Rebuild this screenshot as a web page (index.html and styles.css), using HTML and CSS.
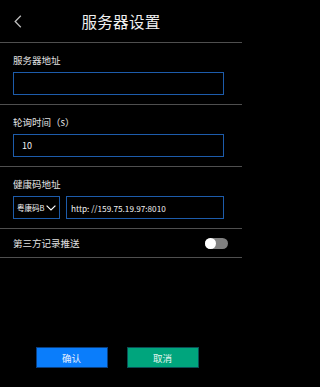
FILE: index.html
```html
<!DOCTYPE html>
<html lang="zh-CN">
<head>
<meta charset="utf-8">
<link rel="stylesheet" href="styles.css">
</head>
<body>
<div class="page">
  <header class="topbar">
    <div class="back">
      <svg width="8" height="13" viewBox="0 0 8 13"><path d="M6.8 0.8 L1.2 6.5 L6.8 12.2" fill="none" stroke="#bdbdbd" stroke-width="1.3"/></svg>
    </div>
    <h1 class="title">服务器设置</h1>
    <div></div>
  </header>

  <section class="field">
    <div class="label">服务器地址</div>
    <div class="input"></div>
  </section>

  <section class="field">
    <div class="label">轮询时间（s）</div>
    <div class="input"><span class="value">10</span></div>
  </section>

  <section class="field">
    <div class="label">健康码地址</div>
    <div class="combo">
      <div class="select">
        <span class="sel-text">粤康码B</span>
        <svg width="10" height="6" viewBox="0 0 10 6"><path d="M0.6 0.6 L5 5 L9.4 0.6" fill="none" stroke="#fff" stroke-width="1.2"/></svg>
      </div>
      <div class="input grow"><span class="value url">http: //159.75.19.97:8010</span></div>
    </div>
  </section>

  <section class="row">
    <span class="label">第三方记录推送</span>
    <div class="toggle"><span class="knob"></span></div>
  </section>

  <footer class="actions">
    <button class="btn confirm">确认</button>
    <button class="btn cancel">取消</button>
  </footer>
</div>
</body>
</html>
```

FILE: styles.css
```css
html, body {
  margin: 0;
  padding: 0;
  background: #000;
}
body {
  font-family: "Noto Sans CJK SC", "Noto Sans", sans-serif;
  color: #e6e6e6;
}
.page {
  width: 242px;
  height: 387px;
  display: flex;
  flex-direction: column;
  box-sizing: border-box;
}
.topbar {
  height: 42px;
  display: grid;
  grid-template-columns: 1fr auto 1fr;
  align-items: center;
  border-bottom: 1px solid #4f4f4f;
}
.back {
  padding-left: 14px;
  display: flex;
  align-items: center;
  height: 13px;
}
.title {
  margin: 0;
  font-size: 15.5px;
  font-weight: 400;
  color: #f0f0f0;
  letter-spacing: 0.3px;
  line-height: 20px;
}
.field {
  padding: 10px 18px 9px 13px;
  border-bottom: 1px solid #4f4f4f;
  display: flex;
  flex-direction: column;
  gap: 5px;
}
.label {
  font-size: 9.5px;
  line-height: 14px;
  color: #e2e2e2;
}
.input {
  height: 23px;
  box-sizing: border-box;
  border: 1px solid #1d5cab;
  display: flex;
  align-items: center;
  padding-left: 8px;
}
.value {
  font-size: 9px;
  color: #f2f2f2;
}
.url {
  font-size: 8.2px;
  padding-left: 0;
}
.combo {
  display: flex;
  gap: 6px;
}
.select {
  width: 47px;
  height: 23px;
  box-sizing: border-box;
  border: 1px solid #1d5cab;
  display: flex;
  align-items: center;
  justify-content: space-between;
  padding: 0 3px 0 3px;
}
.sel-text {
  font-size: 7.5px;
  color: #f0f0f0;
  white-space: nowrap;
}
.grow {
  flex: 1;
  padding-left: 4px;
}
.row {
  height: 28px;
  padding: 0 14px 0 13px;
  border-bottom: 1px solid #4f4f4f;
  display: flex;
  align-items: center;
  justify-content: space-between;
}
.toggle {
  width: 23px;
  height: 11px;
  border-radius: 6px;
  background: #808080;
  position: relative;
}
.knob {
  position: absolute;
  left: 0;
  top: 0;
  width: 11px;
  height: 11px;
  border-radius: 50%;
  background: #fff;
}
.actions {
  margin-top: auto;
  padding: 0 8px 19px 0;
  display: flex;
  justify-content: center;
  gap: 19px;
}
.btn {
  width: 72px;
  height: 21px;
  box-sizing: border-box;
  font-family: "Noto Sans CJK SC", sans-serif;
  font-size: 9.5px;
  color: #e8f0ff;
  border: 1px solid #0a3f80;
  padding: 0;
  cursor: pointer;
}
.confirm {
  background: #0a7dfb;
}
.cancel {
  background: #00a57d;
  border-color: #0a4f55;
  color: #e6f7f1;
}
```
